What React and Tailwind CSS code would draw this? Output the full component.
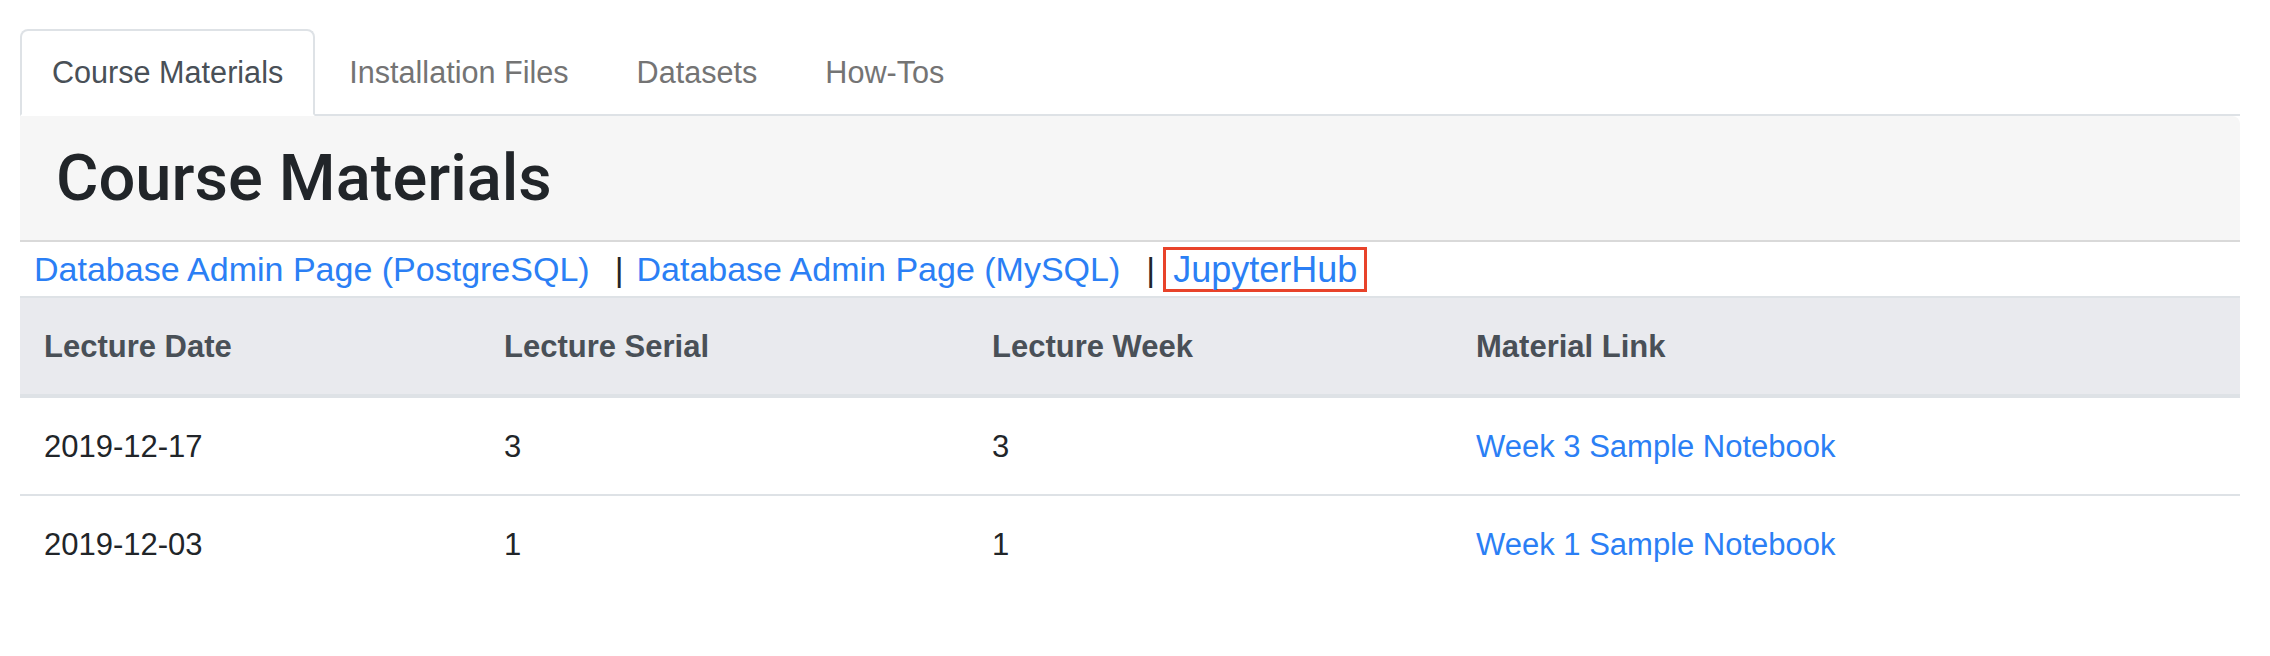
const TABS = ['Course Materials', 'Installation Files', 'Datasets', 'How-Tos']

const COLUMNS = [
    { label: 'Lecture Date', width: 'w-[460px]' },
    { label: 'Lecture Serial', width: 'w-[488px]' },
    { label: 'Lecture Week', width: 'w-[484px]' },
    { label: 'Material Link', width: 'w-[788px]' },
]

const ROWS = [
    { date: '2019-12-17', serial: 3, week: 3, link: 'Week 3 Sample Notebook' },
    { date: '2019-12-03', serial: 1, week: 1, link: 'Week 1 Sample Notebook' },
]

function Tab({ label, active }) {
    if (active) {
        return (
            <div className="-mb-[2px] border-2 border-[#dee2e6] border-b-white rounded-t-[8px] bg-white px-[30px] pt-[17px] pb-[18px] leading-[48px] text-[#495057]">
                {label}
            </div>
        )
    }
    return (
        <div className="-mb-[2px] border-2 border-transparent px-[32px] pt-[17px] pb-[18px] leading-[48px] text-[#747474]">
            {label}
        </div>
    )
}

export default function App() {
    return (
        <div className="w-[2270px] h-[656px] bg-white font-['Liberation_Sans',Arial,sans-serif] text-[#212529]">
            <div className="ml-[20px] w-[2220px] pt-[29px]">
                {/* Tabs */}
                <div className="flex border-b-2 border-[#dee2e6] text-[30.6px]">
                    {TABS.map((t, i) => (
                        <Tab key={t} label={t} active={i === 0} />
                    ))}
                </div>

                {/* Jumbotron header */}
                <div className="h-[126px] bg-[#f6f6f6] border-b-2 border-[#d9d9d9] rounded-tr-[8px] pl-[36px] pt-[24px]">
                    <h1 className="font-['Roboto',Arial,sans-serif] font-medium text-[65px] leading-[76px] text-[#212529]">
                        Course Materials
                    </h1>
                </div>

                {/* Admin links */}
                <div className="flex items-center h-[54px] pl-[14px] text-[34px] leading-[56px]">
                    <a className="text-[#2b7ff5]">Database Admin Page (PostgreSQL)</a>
                    <span className="ml-[25px] text-[#212529]">|</span>
                    <a className="ml-[13px] text-[#2b7ff5]">Database Admin Page (MySQL)</a>
                    <span className="ml-[26px] text-[#212529]">|</span>
                    <a className="ml-[8px] flex items-center h-[45px] border-[3px] border-[#e8432a] px-[7px] text-[36px] leading-[39px] text-[#2b7ff5]">
                        JupyterHub
                    </a>
                </div>

                {/* Materials table */}
                <table className="w-[2220px] border-separate border-spacing-0 text-[31px] leading-[48px]">
                    <thead>
                        <tr className="bg-[#e9eaee]">
                            {COLUMNS.map((c) => (
                                <th
                                    key={c.label}
                                    className={`${c.width} text-left font-bold text-[#495057] border-t-2 border-b-4 border-[#dee2e6] px-[24px] pt-[25px] pb-[23px]`}
                                >
                                    {c.label}
                                </th>
                            ))}
                        </tr>
                    </thead>
                    <tbody>
                        {ROWS.map((r, i) => (
                            <tr key={r.date}>
                                {[r.date, r.serial, r.week].map((v, j) => (
                                    <td
                                        key={j}
                                        className={`px-[24px] pt-[25px] pb-[23px] ${i > 0 ? 'border-t-2 border-[#dee2e6]' : ''}`}
                                    >
                                        {v}
                                    </td>
                                ))}
                                <td className={`px-[24px] pt-[25px] pb-[23px] ${i > 0 ? 'border-t-2 border-[#dee2e6]' : ''}`}>
                                    <a className="text-[#2b7ff5]">{r.link}</a>
                                </td>
                            </tr>
                        ))}
                    </tbody>
                </table>
            </div>
        </div>
    )
}
